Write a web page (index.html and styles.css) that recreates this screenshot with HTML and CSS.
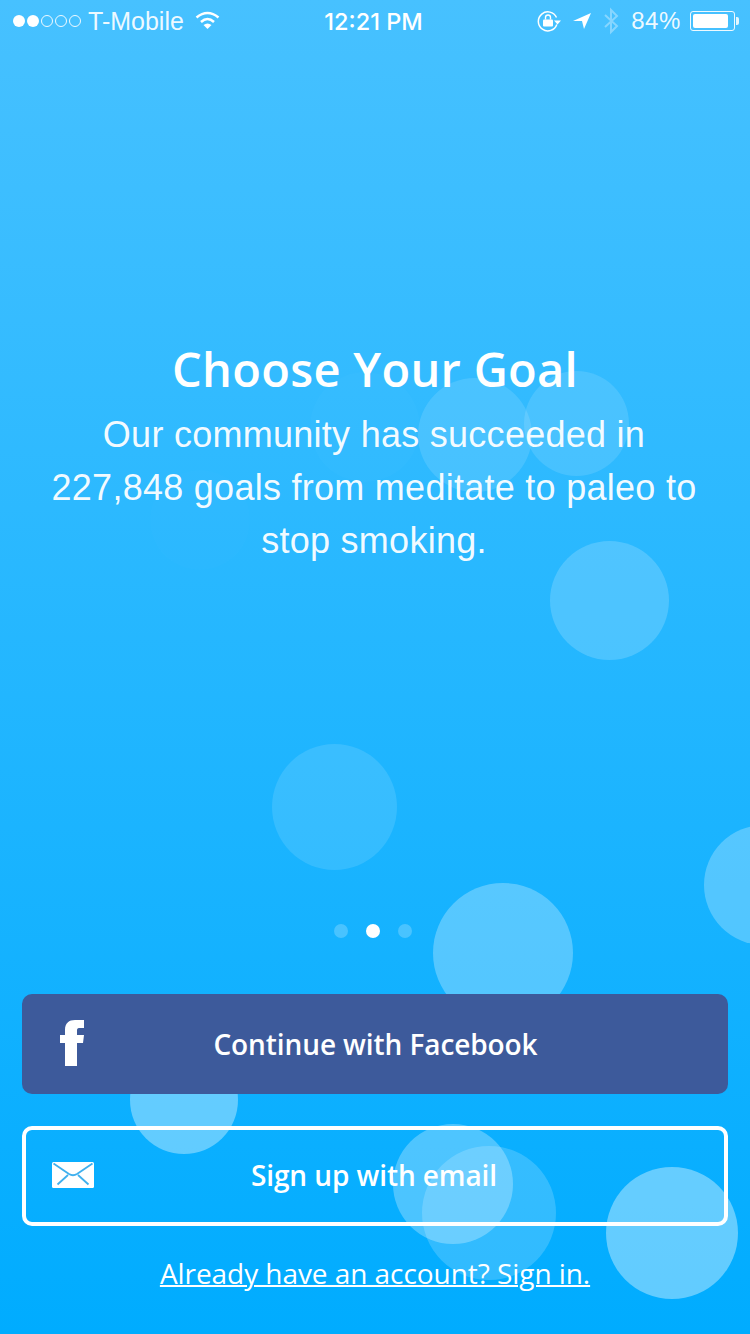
FILE: index.html
```html
<!DOCTYPE html>
<html lang="en">
<head>
<meta charset="utf-8">
<title>Choose Your Goal</title>
<link rel="stylesheet" href="styles.css">
</head>
<body>
<main class="screen">
  <div class="bubble b1"></div>
  <div class="bubble b2"></div>
  <div class="bubble b3"></div>
  <div class="bubble b4"></div>
  <div class="bubble b5"></div>
  <div class="bubble b6"></div>
  <div class="bubble b7"></div>
  <div class="bubble b8"></div>
  <div class="bubble b9"></div>
  <div class="bubble b10"></div>
  <div class="bubble b11"></div>
  <div class="bubble b12"></div>

  <header class="status">
    <div class="status-left">
      <span class="signal"><i class="on"></i><i class="on"></i><i></i><i></i><i></i></span>
      <span class="carrier">T-Mobile</span>
      <svg class="wifi" width="25" height="18" viewBox="0 0 25 18"><path d="M1.500 6.500Q12.500-2.500 23.500 6.500M6 11Q12.500 5 19 11" fill="none" stroke="#fff" stroke-width="2.500"/><path d="M12.500 18L8.500 14Q12.500 11 16.500 14z" fill="#fff"/></svg>
    </div>
    <div class="clock">12:21 PM</div>
    <div class="status-right">
      <svg class="lock" width="24" height="22" viewBox="0 0 24 22"><path d="M19.500 7.500A9.500 9.500 0 1 0 19.800 14.500" fill="none" stroke="#fff" stroke-width="1.500"/><path d="M17 10.500h7l-3.500 4z" fill="#fff"/><rect x="6" y="9.500" width="10" height="7" rx="1" fill="#fff"/><path d="M8.500 9.500V7.500a2.500 2.500 0 0 1 5 0v2" fill="none" stroke="#fff" stroke-width="1.400"/></svg>
      <svg class="arrow" width="18" height="18" viewBox="0 0 18 18"><path d="M18 1L0 9h9l2 8z" fill="#fff"/></svg>
      <svg class="bt" width="16" height="28" viewBox="0 0 16 28"><path d="M2 8l12 11-6 6V3l6 6L2 20" fill="none" stroke="#fff" stroke-width="2"/></svg>
      <span class="pct">84%</span>
      <span class="battery"><span class="level"></span></span><span class="nub"></span>
    </div>
  </header>

  <section class="intro">
    <h1 class="title">Choose Your Goal</h1>
    <p class="copy">Our community has succeeded in<br>227,848 goals from meditate to paleo to<br>stop smoking.</p>
  </section>

  <div class="dots"><i></i><i class="active"></i><i></i></div>

  <div class="actions">
    <a class="btn btn-fb">
      <svg class="fb-icon" width="24" height="46" viewBox="0 0 24 46"><path d="M5 46V23H0v-8h5v-5C5 3 9 0 15 0h9v8h-5c-1.500 0-2 1-2 2.500V15h7l-1 8h-6v23z" fill="#fff"/></svg>
      <span>Continue with Facebook</span>
    </a>
    <a class="btn btn-mail">
      <svg class="mail-icon" width="42" height="26" viewBox="0 0 42 26"><rect width="42" height="26" rx="1.500" fill="#fff"/><path d="M1.500 1.500L17 12q4 2.500 8 0L40.500 1.500M5.500 22.500L16 13M36.500 22.500L26 13" fill="none" stroke="#3fb0ee" stroke-width="1.800"/></svg>
      <span>Sign up with email</span>
    </a>
    <a class="signin">Already have an account? Sign in.</a>
  </div>
</main>
</body>
</html>
```

FILE: styles.css
```css
* { box-sizing: border-box; }
html, body { margin: 0; padding: 0; }
.screen {
  position: relative;
  width: 750px;
  height: 1334px;
  overflow: hidden;
  display: flex;
  flex-direction: column;
  color: #fff;
  background: linear-gradient(180deg, #47c1ff 0%, #00acff 100%);
  font-family: "Open Sans", sans-serif;
}
.bubble { position: absolute; border-radius: 50%; }
.b1 { left: 418px; top: 378px; width: 114px; height: 114px; background: rgba(255,255,255,.12); }
.b2 { left: 524px; top: 371px; width: 105px; height: 105px; background: rgba(255,255,255,.12); }
.b3 { left: 550px; top: 541px; width: 119px; height: 119px; background: rgba(255,255,255,.18); }
.b4 { left: 272px; top: 744px; width: 125px; height: 126px; background: rgba(255,255,255,.12); }
.b5 { left: 704px; top: 825px; width: 120px; height: 120px; background: rgba(255,255,255,.26); }
.b6 { left: 433px; top: 883px; width: 140px; height: 140px; background: rgba(255,255,255,.28); }
.b7 { left: 130px; top: 1046px; width: 108px; height: 108px; background: rgba(255,255,255,.36); }
.b8 { left: 393px; top: 1124px; width: 120px; height: 120px; background: rgba(255,255,255,.28); }
.b9 { left: 422px; top: 1146px; width: 134px; height: 134px; background: rgba(255,255,255,.18); }
.b10 { left: 606px; top: 1167px; width: 132px; height: 132px; background: rgba(255,255,255,.38); }
.b11 { left: 310px; top: 372px; width: 110px; height: 110px; background: rgba(255,255,255,.015); }
.b12 { left: 150px; top: 470px; width: 100px; height: 100px; background: rgba(255,255,255,.012); }

.status {
  position: relative;
  height: 42px;
  display: flex;
  align-items: center;
  justify-content: space-between;
  padding: 0 11px 0 13px;
  font-family: "Liberation Sans", Arial, sans-serif;
  font-size: 24px;
}
.status-left, .status-right { display: flex; align-items: center; }
.signal { display: flex; gap: 2px; margin-right: 7px; }
.signal i { width: 12px; height: 12px; border-radius: 50%; border: 1px solid rgba(255,255,255,.9); }
.signal i.on { background: #fff; }
.carrier { font-size: 25px; color: rgba(255,255,255,.92); }
.wifi { margin-left: 11px; margin-top: -2px; }
.clock {
  position: absolute;
  left: 0;
  right: 3px;
  text-align: center;
  font-family: Inter, "Liberation Sans", sans-serif;
  font-size: 23.500px;
  font-weight: 500;
  pointer-events: none;
}
.lock { margin-right: 12px; }
.arrow { margin-right: 12px; }
.bt { opacity: .35; margin-right: 12px; }
.pct { margin-right: 9px; letter-spacing: .6px; color: rgba(255,255,255,.92); }
.battery {
  width: 45px;
  height: 20px;
  border: 1px solid rgba(255,255,255,.9);
  border-radius: 3px;
  padding: 2px;
  display: flex;
}
.level { width: 35px; background: #fff; border-radius: 2px; }
.nub { width: 3px; height: 8px; background: #fff; margin-left: 1px; border-radius: 0 2px 2px 0; opacity: .85; }

.intro { position: relative; margin-top: 297px; text-align: center; }
.title { margin: 0; font-size: 47px; line-height: 60px; font-weight: 600; letter-spacing: .3px; }
.copy {
  margin: 9px 0 0;
  padding-right: 2px;
  font-family: "Liberation Sans", Arial, sans-serif;
  font-size: 36px;
  line-height: 53px;
  letter-spacing: .27px;
  color: rgba(255,255,255,.95);
}

.dots { position: relative; display: flex; justify-content: center; gap: 18px; margin-top: 357px; padding-right: 4px; }
.dots i { width: 14px; height: 14px; border-radius: 50%; background: rgba(255,255,255,.22); }
.dots i.active { background: #fff; }

.actions { position: relative; margin: 56px 22px 0; display: flex; flex-direction: column; }
.btn {
  position: relative;
  height: 100px;
  border-radius: 10px;
  display: flex;
  align-items: center;
  justify-content: center;
  font-size: 28px;
  font-weight: 600;
  letter-spacing: -.09px;
}
.btn-fb { background: #3d5a9b; }
.btn-mail { margin-top: 32px; border: 4px solid #fff; background: transparent; }
.btn-fb span { margin-left: 1px; }
.btn-mail span { margin-top: -2px; margin-right: 2px; }
.fb-icon { position: absolute; left: 38px; top: 26px; }
.mail-icon { position: absolute; left: 26px; top: 32px; }
.signin {
  margin-top: 28px;
  text-align: center;
  font-size: 28px;
  line-height: 38px;
  letter-spacing: -.06px;
  text-decoration: underline;
  text-decoration-thickness: 2px;
}
```
